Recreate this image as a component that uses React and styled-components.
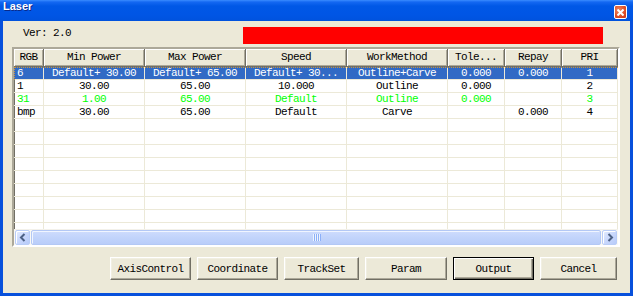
import styled, { createGlobalStyle } from "styled-components";

const GlobalStyle = createGlobalStyle`
  html, body { margin: 0; padding: 0; background: #ECE9D8; }
  * { box-sizing: border-box; }
`;

const mono = `"Liberation Mono", "DejaVu Sans Mono", monospace`;

const columns = [
  { title: "RGB", align: "left" },
  { title: "Min Power" },
  { title: "Max Power" },
  { title: "Speed" },
  { title: "WorkMethod" },
  { title: "Tole..." },
  { title: "Repay" },
  { title: "PRI" },
];

const rows = [
  { cells: ["6", "Default+ 30.00", "Default+ 65.00", "Default+ 30...", "Outline+Carve", "0.000", "0.000", "1"], selected: true },
  { cells: ["1", "30.00", "65.00", "10.000", "Outline", "0.000", "", "2"] },
  { cells: ["31", "1.00", "65.00", "Default", "Outline", "0.000", "", "3"], color: "#00FF00" },
  { cells: ["bmp", "30.00", "65.00", "Default", "Carve", "", "0.000", "4"] },
];

const buttons = [
  { label: "AxisControl", width: 81 },
  { label: "Coordinate", width: 81 },
  { label: "TrackSet", width: 75 },
  { label: "Param", width: 82 },
  { label: "Output", width: 81, isDefault: true },
  { label: "Cancel", width: 77 },
];

export default function App() {
  const empty = Array.from({ length: 9 });
  return (
    <>
      <GlobalStyle />
      <Window>
        <TitleBar>
          <Title>Laser</Title>
          <CloseButton>
            <svg width="7" height="7" viewBox="0 0 7 7">
              <path d="M0.5 0.5 L6.5 6.5 M6.5 0.5 L0.5 6.5" stroke="#fff" strokeWidth="2" />
            </svg>
          </CloseButton>
        </TitleBar>
        <Client>
          <TopRow>
            <Version>Ver: 2.0</Version>
            <RedBar />
          </TopRow>
          <ListBox>
            <GridArea>
              <HeaderRow>
                {columns.map((c) => (
                  <HeaderCell key={c.title}>{c.title}</HeaderCell>
                ))}
              </HeaderRow>
              {rows.map((r, i) => (
                <DataRow key={i} $selected={r.selected} $color={r.color}>
                  {r.cells.map((v, j) => (
                    <Cell key={j} $align={columns[j].align}>{v}</Cell>
                  ))}
                </DataRow>
              ))}
              {empty.map((_, i) => (
                <DataRow key={"e" + i}>
                  {columns.map((c) => (
                    <Cell key={c.title} />
                  ))}
                </DataRow>
              ))}
            </GridArea>
            <HScroll>
              <ScrollButton>
                <svg width="8" height="9" viewBox="0 0 8 9">
                  <path d="M5.5 1 L2 4.5 L5.5 8" fill="none" stroke="#4D6185" strokeWidth="2" />
                </svg>
              </ScrollButton>
              <Thumb>
                <Grip>
                  <i /><i /><i /><i />
                </Grip>
              </Thumb>
              <ScrollButton>
                <svg width="8" height="9" viewBox="0 0 8 9">
                  <path d="M2.5 1 L6 4.5 L2.5 8" fill="none" stroke="#4D6185" strokeWidth="2" />
                </svg>
              </ScrollButton>
            </HScroll>
          </ListBox>
          <ButtonRow>
            {buttons.map((b) => (
              <DialogButton key={b.label} $width={b.width} $default={b.isDefault}>
                {b.label}
              </DialogButton>
            ))}
          </ButtonRow>
        </Client>
      </Window>
    </>
  );
}

const Window = styled.div`
  width: 633px;
  height: 296px;
  display: flex;
  flex-direction: column;
  overflow: hidden;
`;

const TitleBar = styled.div`
  height: 21px;
  flex: none;
  display: flex;
  align-items: flex-start;
  justify-content: space-between;
  padding: 0 6px 0 3px;
  background: linear-gradient(#3A8CFF 0, #1468F2 2px, #0058E6 6px, #0055E5 15px, #0052DD 21px);
`;

const Title = styled.span`
  font-family: "Liberation Sans", Arial, sans-serif;
  font-weight: 700;
  font-size: 11px;
  line-height: 13px;
  color: #fff;
  text-shadow: 1px 1px 0 #0A2A8A;
`;

const CloseButton = styled.div`
  width: 13px;
  height: 14px;
  margin-top: 5px;
  display: flex;
  align-items: center;
  justify-content: center;
  border: 1px solid #fff;
  border-radius: 2px;
  background: radial-gradient(circle at 35% 35%, #F08A64 0, #E0522A 55%, #C8341A 100%);
`;

const Client = styled.div`
  flex: 1;
  display: flex;
  flex-direction: column;
  background: #ECE9D8;
  border: 3px solid #0750DC;
  border-top: none;
  font-family: ${mono};
  font-size: 11px;
  letter-spacing: -0.6px;
  color: #000;
`;

const TopRow = styled.div`
  display: flex;
  justify-content: space-between;
  padding: 6px 27px 0 20px;
  margin-bottom: 3px;
`;

const Version = styled.span`
  line-height: 13px;
`;

const RedBar = styled.div`
  width: 360px;
  height: 17px;
  background: #FF0000;
`;

const ListBox = styled.div`
  width: 608px;
  height: 200px;
  margin-left: 9px;
  display: flex;
  flex-direction: column;
  background: #fff;
  border-style: solid;
  border-width: 2px;
  border-color: #ACA899 #FFFFFF #FFFFFF #ACA899;
  box-shadow: inset 1px 1px 0 #716F64;
`;

const GridArea = styled.div`
  flex: 1;
  overflow: hidden;
`;

const gridCols = "30px 101px 101px 101px 101px 57px 57px 56px";

const HeaderRow = styled.div`
  display: grid;
  grid-template-columns: ${gridCols};
  height: 18px;
  background: #ECE9D8;
`;

const HeaderCell = styled.div`
  text-align: center;
  line-height: 16px;
  background: #ECE9D8;
  border-right: 1px solid #716F64;
  border-bottom: 1px solid #716F64;
  box-shadow: inset 1px 1px 0 #FFFFFF, inset -1px -1px 0 #ACA899;
  white-space: nowrap;
  overflow: hidden;
`;

const DataRow = styled.div`
  position: relative;
  display: grid;
  grid-template-columns: ${gridCols};
  height: 13px;
  background: ${(p) => (p.$selected ? "#316AC5" : "transparent")};
  color: ${(p) => (p.$selected ? "#fff" : p.$color || "#000")};
  &::after {
    content: "";
    display: ${(p) => (p.$selected ? "block" : "none")};
    position: absolute;
    left: 0;
    top: 0;
    right: 0;
    bottom: 0;
    border-top: 1px dotted #CE953A;
    border-left: 1px dotted #CE953A;
    pointer-events: none;
  }
`;

const Cell = styled.div`
  line-height: 12px;
  text-align: ${(p) => p.$align || "center"};
  padding: 0 ${(p) => (p.$align === "left" ? "0 0 3px" : "1px")};
  border-right: 1px solid #ECE9D8;
  border-bottom: 1px solid #ECE9D8;
  white-space: nowrap;
  overflow: hidden;
`;

const HScroll = styled.div`
  height: 16px;
  flex: none;
  display: flex;
  padding: 0 1px 0 1px;
  background: #FAF9F4;
  border-top: 1px solid #F3F1EA;
`;

const ScrollButton = styled.div`
  width: 15px;
  height: 15px;
  flex: none;
  display: flex;
  align-items: center;
  justify-content: center;
  border: 1px solid #B9CDF7;
  border-radius: 2px;
  background: linear-gradient(135deg, #E4ECFE 0%, #C9D8FC 50%, #B7CBF9 100%);
  box-shadow: inset 1px 1px 0 #FFFFFF;
`;

const Thumb = styled.div`
  flex: 1;
  height: 15px;
  margin: 0 1px;
  display: flex;
  align-items: center;
  justify-content: center;
  border: 1px solid #B3C8F5;
  border-radius: 2px;
  background: linear-gradient(#CEDCFD 0%, #C2D4FB 50%, #B9CDF9 100%);
  box-shadow: inset 1px 1px 0 #F0F5FF;
`;

const Grip = styled.div`
  display: flex;
  gap: 1px;
  i {
    display: block;
    width: 1px;
    height: 7px;
    background: #EEF4FE;
    box-shadow: 1px 0 0 #8CB0F8;
  }
`;

const ButtonRow = styled.div`
  display: flex;
  justify-content: flex-end;
  gap: 6px;
  margin-top: 10px;
  padding-right: 13px;
`;

const DialogButton = styled.div`
  width: ${(p) => p.$width}px;
  height: 23px;
  display: flex;
  align-items: center;
  justify-content: center;
  background: #ECE9D8;
  border-style: solid;
  border-width: 1px;
  border-color: ${(p) => (p.$default ? "#000" : "#FFFFFF #716F64 #716F64 #FFFFFF")};
  box-shadow: ${(p) =>
    p.$default
      ? "inset 1px 1px 0 #FFFFFF, inset -1px -1px 0 #716F64, inset -2px -2px 0 #ACA899"
      : "inset -1px -1px 0 #ACA899, inset 1px 1px 0 #F1EFE2"};
`;
